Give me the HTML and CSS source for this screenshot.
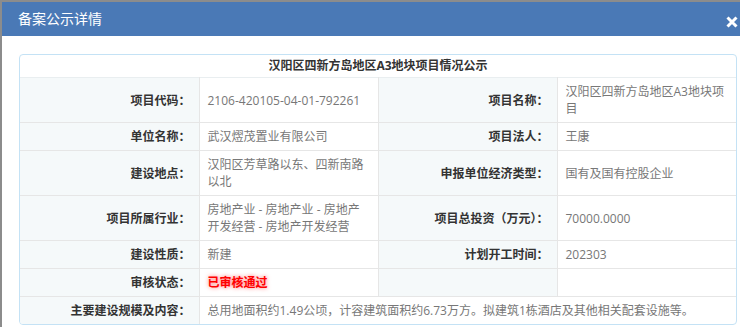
FILE: index.html
```html
<!DOCTYPE html>
<html lang="zh-CN">
<head>
    <meta charset="UTF-8">
    <meta name="viewport" content="width=device-width, initial-scale=1.0">
    <title>备案公示详情</title>
    <link rel="stylesheet" href="styles.css">
</head>
<body>
    <div class="dialog">
        <div class="dialog-head">
            <span class="dialog-title">备案公示详情</span>
            <span class="close">
                <svg width="12" height="12" viewBox="0 0 12 12">
                    <path d="M1.5 1.5 L10.5 10.5 M10.5 1.5 L1.5 10.5" stroke="#fff" stroke-width="3" stroke-linecap="butt"/>
                </svg>
            </span>
        </div>
        <div class="dialog-body">
            <div class="panel">
                <div class="panel-heading">汉阳区四新方岛地区A3地块项目情况公示</div>
                <table class="info">
                    <tr>
                        <th>项目代码：</th>
                        <td>2106-420105-04-01-792261</td>
                        <th>项目名称：</th>
                        <td>汉阳区四新方岛地区A3地块项目</td>
                    </tr>
                    <tr>
                        <th>单位名称：</th>
                        <td>武汉熤茂置业有限公司</td>
                        <th>项目法人：</th>
                        <td>王康</td>
                    </tr>
                    <tr>
                        <th>建设地点：</th>
                        <td>汉阳区芳草路以东、四新南路以北</td>
                        <th>申报单位经济类型：</th>
                        <td>国有及国有控股企业</td>
                    </tr>
                    <tr>
                        <th>项目所属行业：</th>
                        <td>房地产业 - 房地产业 - 房地产开发经营 - 房地产开发经营</td>
                        <th>项目总投资（万元）：</th>
                        <td>70000.0000</td>
                    </tr>
                    <tr>
                        <th>建设性质：</th>
                        <td>新建</td>
                        <th>计划开工时间：</th>
                        <td>202303</td>
                    </tr>
                    <tr>
                        <th>审核状态：</th>
                        <td><span class="passed">已审核通过</span></td>
                        <th></th>
                        <td></td>
                    </tr>
                    <tr>
                        <th>主要建设规模及内容：</th>
                        <td colspan="3">总用地面积约1.49公顷，计容建筑面积约6.73万方。拟建筑1栋酒店及其他相关配套设施等。</td>
                    </tr>
                </table>
            </div>
        </div>
    </div>
</body>
</html>
```

FILE: styles.css
```css
body {
    margin: 0;
    background-color: #8c8c8c;
    font-family: "Open Sans", "Noto Sans CJK SC", sans-serif;
    font-size: 12px;
    overflow: hidden;
}
.dialog {
    width: 752px;
    margin: 2px 0 0 2px;
    background-color: #fff;
    height: 330px;
}
.dialog-head {
    position: relative;
    height: 34px;
    background-color: #4a79b6;
    padding-left: 16px;
}
.dialog-title {
    color: #fff;
    font-size: 14px;
    line-height: 34px;
}
.close {
    position: absolute;
    top: 14px;
    left: 724px;
    width: 12px;
    height: 12px;
}
.close svg {
    display: block;
}
.dialog-body {
    padding: 18px 17px;
}
.panel {
    border: 1px solid #c4e2f5;
    border-radius: 4px;
    overflow: hidden;
}
.panel-heading {
    padding: 2px 0;
    line-height: 18px;
    text-align: center;
    font-weight: bold;
    color: #333;
}
.info {
    width: 100%;
    border-collapse: collapse;
    table-layout: fixed;
}
.info th, .info td {
    border: 1px solid #e6e6e6;
    padding: 5px 8px;
    line-height: 17px;
    vertical-align: middle;
}
.info tr:first-child th, .info tr:first-child td {
    border-top-color: #e9eef0;
}
.info tr:last-child th, .info tr:last-child td {
    border-bottom: none;
}
.info tr th:first-child {
    border-left: none;
}
.info tr td:last-child {
    border-right: none;
}
.info th {
    background-color: #f5f9fa;
    color: #333;
    text-align: right;
    font-weight: bold;
}
.info td {
    color: #777;
    text-align: left;
}
.passed {
    color: #f00;
    font-weight: bold;
    text-shadow: 0 0 4px rgba(255, 0, 0, 0.6);
}
```
